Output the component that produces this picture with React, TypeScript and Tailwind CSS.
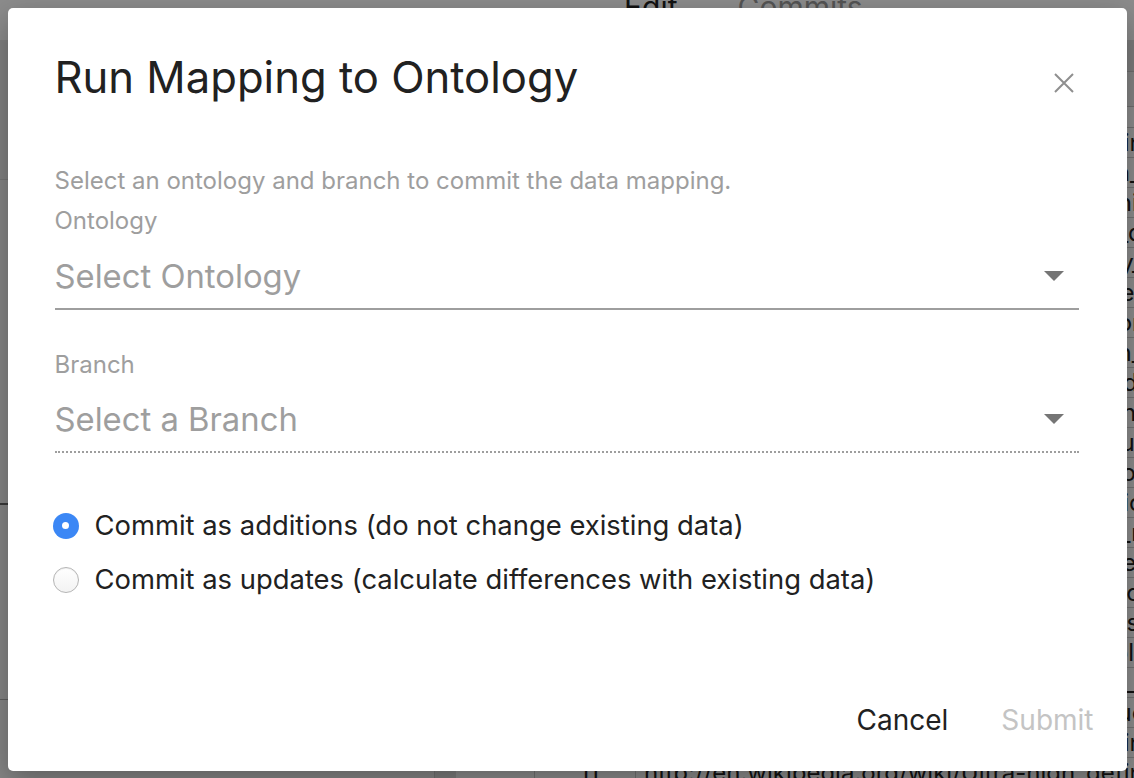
import { useState } from 'react'

const rows = [
  'http://en.wikipedia.org/wiki/Ultra-high_definition_television',
  'http://en.wikipedia.org/wiki/High-definition_television',
  'http://en.wikipedia.org/wiki/Standard-definition_television',
  'http://en.wikipedia.org/wiki/Liquid-crystal_display_television',
  'http://en.wikipedia.org/wiki/Plasma_display_television',
  'http://en.wikipedia.org/wiki/Organic_light-emitting_diode_television',
  'http://en.wikipedia.org/wiki/Smart_television_platform_television',
  'http://en.wikipedia.org/wiki/Curved_screen_display_television',
  'http://en.wikipedia.org/wiki/Quantum_dot_display_television',
  'http://en.wikipedia.org/wiki/Rear-projection_television_system',
  'http://en.wikipedia.org/wiki/Cathode-ray_tube_television_design',
  'http://en.wikipedia.org/wiki/Digital_television_transition_plan',
  'http://en.wikipedia.org/wiki/Analog_television_broadcasting_system',
  'http://en.wikipedia.org/wiki/Television_set_manufacturers_of_japan',
  'http://en.wikipedia.org/wiki/Television_receiver_design_and_operation',
  'http://en.wikipedia.org/wiki/Three-dimensional_television_platform',
  'http://en.wikipedia.org/wiki/Laser_video_display_television_screen',
  'http://en.wikipedia.org/wiki/MicroLED_display_technology_television',
  'http://en.wikipedia.org/wiki/Field_emission_display_television',
  'http://en.wikipedia.org/wiki/Surface-conduction_television_screen',
  'http://en.wikipedia.org/wiki/Ultra-high_definition_television',
  'http://en.wikipedia.org/wiki/Ultra-high_definition_television',
]

function CaretDown() {
  return (
    <svg width="20" height="10" viewBox="0 0 20 10" className="shrink-0">
      <polygon points="0,0 20,0 10,10" fill="#757575" />
    </svg>
  )
}

function Radio({ checked }: { checked: boolean }) {
  if (checked) {
    return (
      <span className="flex h-[26px] w-[26px] shrink-0 items-center justify-center rounded-full bg-[#3b87f5]">
        <span className="h-[7px] w-[7px] rounded-full bg-white" />
      </span>
    )
  }
  return (
    <span className="h-[26px] w-[26px] shrink-0 rounded-full border border-[#b5b5b5] bg-gradient-to-b from-white to-[#f3f3f3] shadow-[inset_0_1px_1px_rgba(0,0,0,0.06)]" />
  )
}

function BackgroundPage() {
  return (
    <div className="flex h-[778px] w-[1134px] flex-col overflow-hidden bg-white">
      {/* Top nav */}
      <div className="flex h-[40px] shrink-0 items-start bg-white">
        <div className="w-[624px]" />
        <span className="-mt-[8px] text-[30px] leading-none text-[#222]">Edit</span>
        <span className="-mt-[8px] ml-[60px] text-[30px] leading-none text-[#9a9a9a]">Commits</span>
      </div>

      <div className="flex flex-1">
        {/* Left panel */}
        <div className="flex w-[435px] shrink-0 flex-col border-r border-[#cfcfcf] bg-[#f4f4f4]">
          <div className="h-[140px] border-b border-[#d8d8d8] bg-[#ececec]" />
          <div className="h-[325px] border-b-2 border-[#6a6a6a] bg-[#f4f4f4]" />
          <div className="h-[195px] border-b border-[#b0b0b0] bg-[#f4f4f4]" />
          <div className="flex-1 bg-[#f4f4f4]" />
        </div>

        {/* Right table */}
        <div className="flex flex-1 flex-col">
          <div className="h-[32px] border-b border-[#c8c8c8] bg-[#e2e2e2]" />
          <div className="h-[35px] border-b border-[#c8c8c8] bg-[#f0f0f0]" />
          <div className="h-[21px] border-b border-[#c8c8c8] bg-white" />
          {rows.map((url, i) => (
            <div
              key={i}
              className="flex h-[30px] shrink-0 items-center border-b border-[#cfcfcf] text-[24px] leading-none text-[#222]"
            >
              <div className="h-full w-[21px] shrink-0 bg-[#e6e6e6]" />
              <div className="h-full w-[79px] shrink-0 border-r border-[#cfcfcf]" />
              <div className="flex h-full w-[101px] shrink-0 items-center justify-end border-r border-[#cfcfcf] pr-[36px]">
                {i - 10}
              </div>
              <div className="overflow-hidden whitespace-nowrap pl-[8px]">{url}</div>
            </div>
          ))}
        </div>
      </div>
    </div>
  )
}

export default function App() {
  const [mode, setMode] = useState<'additions' | 'updates'>('additions')

  return (
    <div className="relative h-[778px] w-[1134px] overflow-hidden font-['Inter',sans-serif]">
      <BackgroundPage />

      {/* Modal overlay */}
      <div className="absolute inset-0 flex items-center justify-center bg-black/45">
        <div className="relative flex h-[763px] w-[1119px] flex-col rounded-[5px] bg-white pl-[47px] pr-[48px] pt-[48px] shadow-[0_10px_30px_rgba(0,0,0,0.3)]">
          {/* Header */}
          <div className="flex items-start justify-between">
            <h2 className="text-[43.6px] leading-none font-normal text-[#212121]">Run Mapping to Ontology</h2>
            <button className="mr-[5px] mt-[17px] text-[#8f8f8f]" aria-label="Close">
              <svg width="20" height="20" viewBox="0 0 20 20">
                <path d="M1 1L19 19M19 1L1 19" stroke="currentColor" strokeWidth="2" />
              </svg>
            </button>
          </div>

          {/* Body */}
          <p className="mt-[70px] text-[24px] leading-none text-[#9e9e9e]">
            Select an ontology and branch to commit the data mapping.
          </p>

          <label className="mt-[16px] text-[24px] leading-none text-[#9e9e9e]">Ontology</label>
          <div className="mt-[27px] flex items-center justify-between border-b-2 border-[#9e9e9e] pb-[15px]">
            <span className="text-[32.8px] leading-none text-[#9e9e9e]">Select Ontology</span>
            <span className="mr-[15px]">
              <CaretDown />
            </span>
          </div>

          <label className="mt-[43px] text-[24px] leading-none text-[#9e9e9e]">Branch</label>
          <div className="mt-[26px] flex items-center justify-between border-b-2 border-dotted border-[#9e9e9e] pb-[15px]">
            <span className="text-[32.8px] leading-none text-[#9e9e9e]">Select a Branch</span>
            <span className="mr-[15px]">
              <CaretDown />
            </span>
          </div>

          {/* Commit mode */}
          <div className="-ml-[2px] mt-[57px] flex flex-col gap-[22px]">
            <button
              onClick={() => setMode('additions')}
              className="flex h-[32px] items-center gap-[16px] text-left"
            >
              <Radio checked={mode === 'additions'} />
              <span className="text-[27.4px] leading-none text-[#212121]">
                Commit as additions (do not change existing data)
              </span>
            </button>
            <button
              onClick={() => setMode('updates')}
              className="flex h-[32px] items-center gap-[16px] text-left"
            >
              <Radio checked={mode === 'updates'} />
              <span className="text-[27.4px] leading-none text-[#212121]">
                Commit as updates (calculate differences with existing data)
              </span>
            </button>
          </div>

          {/* Footer */}
          <div className="-mr-[15px] mt-auto flex items-center justify-end gap-[53px] pb-[37px]">
            <button className="text-[28px] leading-none text-[#212121]">Cancel</button>
            <button className="text-[28px] leading-none text-[#c4c4c4]" disabled>
              Submit
            </button>
          </div>
        </div>
      </div>
    </div>
  )
}
